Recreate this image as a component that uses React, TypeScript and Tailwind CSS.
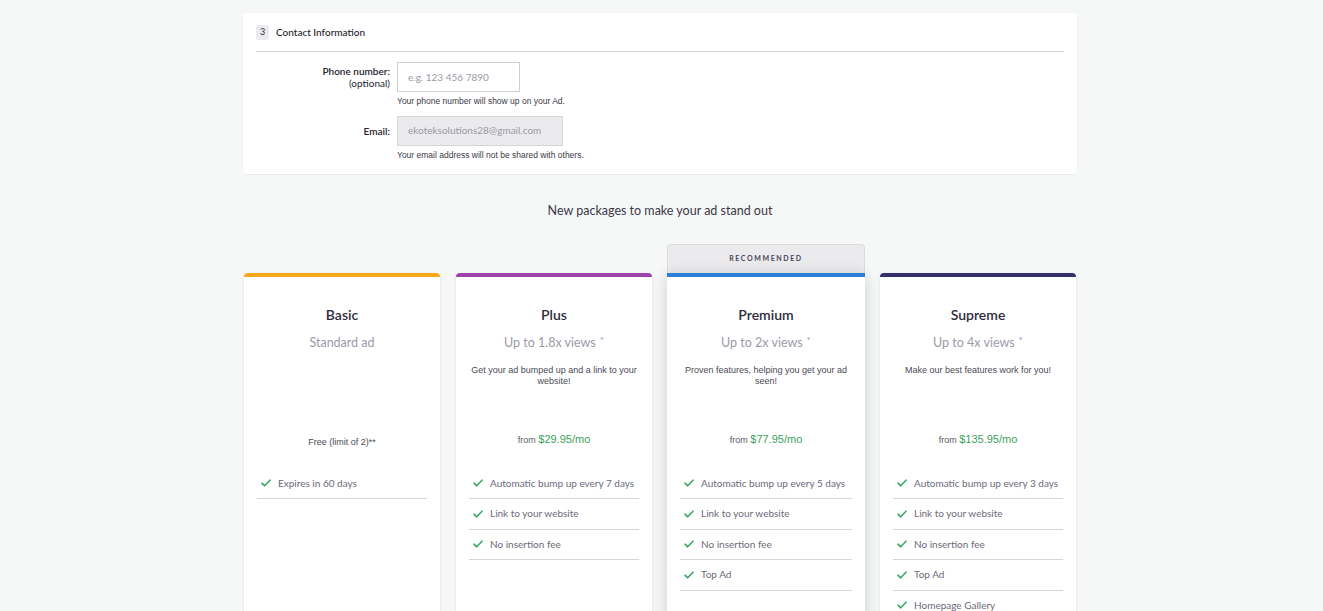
import React from 'react';

type Plan = {
  name: string;
  subtitle: string;
  star: boolean;
  description?: string;
  price?: string;
  free?: string;
  color: string;
  recommended?: boolean;
  features: string[];
};

const PLANS: Plan[] = [
  {
    name: 'Basic',
    subtitle: 'Standard ad',
    star: false,
    free: 'Free (limit of 2)**',
    color: 'bg-[#f7a81b]',
    features: ['Expires in 60 days'],
  },
  {
    name: 'Plus',
    subtitle: 'Up to 1.8x views',
    star: true,
    description: 'Get your ad bumped up and a link to your website!',
    price: '$29.95/mo',
    color: 'bg-[#9b45ac]',
    features: ['Automatic bump up every 7 days', 'Link to your website', 'No insertion fee'],
  },
  {
    name: 'Premium',
    subtitle: 'Up to 2x views',
    star: true,
    description: 'Proven features, helping you get your ad seen!',
    price: '$77.95/mo',
    color: 'bg-[#2a80d8]',
    recommended: true,
    features: ['Automatic bump up every 5 days', 'Link to your website', 'No insertion fee', 'Top Ad'],
  },
  {
    name: 'Supreme',
    subtitle: 'Up to 4x views',
    star: true,
    description: 'Make our best features work for you!',
    price: '$135.95/mo',
    color: 'bg-[#352f6d]',
    features: [
      'Automatic bump up every 3 days',
      'Link to your website',
      'No insertion fee',
      'Top Ad',
      'Homepage Gallery',
    ],
  },
];

const Check = () => (
  <svg width="10" height="8" viewBox="0 0 10 8" className="shrink-0">
    <path d="M1 4.2 L3.7 6.8 L9 1.2" fill="none" stroke="#3aa865" strokeWidth="1.6" strokeLinecap="round" strokeLinejoin="round" />
  </svg>
);

function PlanCard({ plan }: { plan: Plan }) {
  return (
    <div className="flex flex-col">
      {plan.recommended ? (
        <div className="h-[29px] rounded-t-[4px] border border-b-0 border-[#dcdce0] bg-[#ebebee] flex items-center justify-center text-[7px] font-bold tracking-[1.6px] text-[#4b4658]">
          RECOMMENDED
        </div>
      ) : (
        <div className="h-[29px]" />
      )}
      <div
        className={`flex flex-col bg-white h-[380px] ${
          plan.recommended
            ? 'shadow-[0_2px_14px_rgba(0,0,0,0.16)]'
            : 'border-x border-[#ededee] rounded-t-[4px] shadow-[0_0_3px_rgba(0,0,0,0.04)]'
        }`}
      >
        <div className={`h-[4px] shrink-0 ${plan.color} ${plan.recommended ? '' : 'rounded-t-[4px]'}`} />
        <div className="h-[148px] shrink-0 flex flex-col items-center px-[14px] pt-[28px]">
          <div className="text-[14px] leading-[20px] font-semibold text-[#2e2c3c]">{plan.name}</div>
          <div className="mt-[8px] text-[12.5px] leading-[20px] text-[#9b9aa8]">
            {plan.subtitle}
            {plan.star && <sup className="ml-[4px] relative -top-[3px] text-[10px] text-[#9b9aa8]">*</sup>}
          </div>
          {plan.description && (
            <p className="mt-[12px] text-center text-[9px] leading-[11px] text-[#4c4a55] font-['Liberation_Sans',Arial,sans-serif]">
              {plan.description}
            </p>
          )}
        </div>
        <div className="h-[30px] shrink-0 flex items-center justify-center font-['Liberation_Sans',Arial,sans-serif]">
          {plan.free ? (
            <span className="pt-[6px] text-[9px] text-[#4c4a55]">{plan.free}</span>
          ) : (
            <span className="text-[9px] text-[#5a5866]">
              from <span className="text-[11px] text-[#3ba15b]">{plan.price}</span>
            </span>
          )}
        </div>
        <ul className="mt-[14px] px-[13px] shrink-0">
          {plan.features.map((f) => (
            <li
              key={f}
              className="h-[30.5px] flex items-center gap-[7px] pl-[4px] border-b border-[#d6d6d9] text-[10px] text-[#6c6a78]"
            >
              <Check />
              <span>{f}</span>
            </li>
          ))}
        </ul>
      </div>
    </div>
  );
}

export default function App() {
  return (
    <div className="h-[611px] overflow-hidden bg-[#f6f7f7] pr-[3px] font-['Lato','Noto_Sans',sans-serif]">
      <div className="w-[834px] mx-auto pt-[13px]">
        <section className="bg-white rounded-b-[4px] shadow-[0_1px_2px_rgba(0,0,0,0.06)] px-[13px] pb-[12px]">
          <div className="h-[39px] flex items-center gap-[7px] border-b border-[#cfcfd3]">
            <span className="w-[13px] h-[15px] rounded-[2px] bg-[#ebebef] text-[9px] text-[#333] flex items-center justify-center">
              3
            </span>
            <span className="text-[10px] font-medium text-[#1f1d2b]">Contact Information</span>
          </div>

          <div className="mt-[10px] flex gap-[7px]">
            <div className="w-[134px] text-right text-[10px] leading-[12px] pt-[3px] text-[#26242f]">
              <div className="font-semibold">Phone number:</div>
              <div>(optional)</div>
            </div>
            <div>
              <input
                placeholder="e.g. 123 456 7890"
                className="w-[123px] h-[30px] border border-[#cfcfd3] bg-white px-[10px] text-[10px] text-[#333] placeholder:text-[#9a99a6] outline-none"
              />
              <div className="mt-[3px] text-[8.5px] text-[#3b3946] font-['Liberation_Sans',Arial,sans-serif]">
                Your phone number will show up on your Ad.
              </div>
            </div>
          </div>

          <div className="mt-[8px] flex gap-[7px]">
            <div className="w-[134px] text-right text-[10px] leading-[12px] pt-[9px] font-semibold text-[#26242f]">
              Email:
            </div>
            <div>
              <div className="w-[166px] h-[30px] border border-[#d6d6da] bg-[#ebebed] px-[10px] flex items-center text-[10px] text-[#9a99a6]">
                ekoteksolutions28@gmail.com
              </div>
              <div className="mt-[3px] text-[8.5px] text-[#3b3946] font-['Liberation_Sans',Arial,sans-serif]">
                Your email address will not be shared with others.
              </div>
            </div>
          </div>
        </section>

        <h2 className="mt-[27px] text-center text-[12.5px] leading-[20px] text-[#3b3848]">
          New packages to make your ad stand out
        </h2>

        <div className="mt-[23px] grid grid-cols-4 gap-[14px]">
          {PLANS.map((p) => (
            <PlanCard key={p.name} plan={p} />
          ))}
        </div>
      </div>
    </div>
  );
}
